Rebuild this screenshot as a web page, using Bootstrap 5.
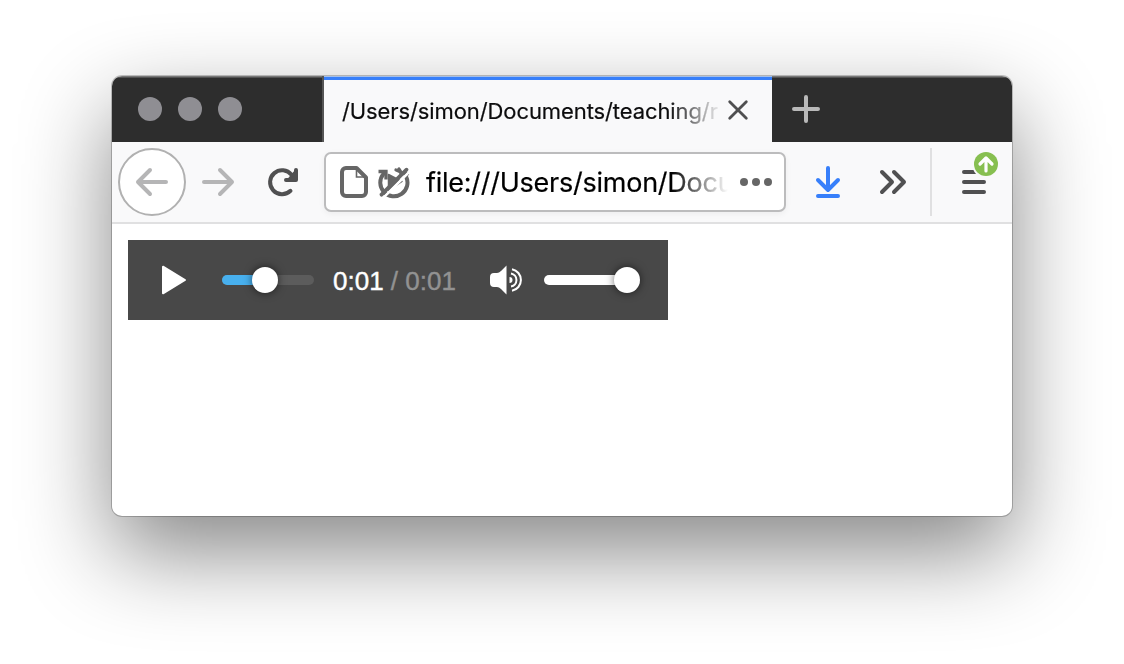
<!DOCTYPE html>
<html lang="en">
<head>
<meta charset="utf-8">
<title>Audio player in a browser window</title>
<link href="https://cdn.jsdelivr.net/npm/bootstrap@5.3.0/dist/css/bootstrap.min.css" rel="stylesheet">
<style>
body{height:664px;padding:76px 112px 0;background:#fff;font-family:Inter,"Liberation Sans",sans-serif;color:#0c0c0d}
svg{display:block;flex:none;fill:none;stroke-linecap:round;stroke-linejoin:round}
.window{width:900px;height:440px;border-radius:10px;background:#fff;box-shadow:0 0 0 1px rgba(0,0,0,.22),0 36px 90px rgba(0,0,0,.48)}
.chrome{border-radius:10px 10px 0 0}
.tabs{height:66px;background:linear-gradient(#777 0,#777 1px,#2d2d2d 2px)}
.lights{width:212px;padding-left:26px;gap:16px;border-right:2px solid #555;height:66px}
.light{width:24px;height:24px;border-radius:50%;background:#8f8e93}
.tab-active{width:448px;height:66px;background:#f9f9fa;border-top:1px solid #a4bfe8;box-shadow:inset 0 3px #377ffa;padding:4px 23px 0 18px}
.tab-title{width:376px;font-size:22px;letter-spacing:-.1px;-webkit-text-stroke:.2px;-webkit-mask-image:linear-gradient(90deg,#000 326px,transparent 380px)}
.toolbar{height:82px;background:#f9f9fa;border-bottom:2px solid #e0e0e1;padding-left:6px}
.address{width:462px;height:60px;border:2px solid #bcbcbd;border-radius:7px;background:#fff;padding-left:12px;box-shadow:0 2px 6px rgba(0,0,0,.05)}
.address-text{width:308px;margin:3px 0 0 16px;font-size:27px;letter-spacing:-.25px;-webkit-text-stroke:.2px;color:#000;-webkit-mask-image:linear-gradient(90deg,#000 245px,transparent 302px)}
.divider{width:2px;height:68px;background:#e0e0e1}
.player{width:540px;height:80px;margin:16px;background:#484848;font:26px "Liberation Sans",sans-serif;color:#fff}
.track{height:10px;border-radius:5px;background:#5c5c5c}
.elapsed{height:10px;border-radius:5px;background:#48b0ee}
.knob{width:26px;height:26px;border-radius:50%;background:#fff;box-shadow:0 0 9px rgba(0,0,0,.6)}
.times{width:176px;padding:2px 0 0 19px;-webkit-text-stroke:.4px}
.total{color:#929292}
</style>
</head>
<body>
<main class="window">
  <div class="chrome overflow-hidden">
    <div class="tabs d-flex">
      <div class="lights d-flex align-items-center"><span class="light"></span><span class="light"></span><span class="light"></span></div>
      <div class="tab-active d-flex align-items-center justify-content-between">
        <div class="tab-title text-nowrap">/Users/simon/Documents/teaching/r</div>
        <svg width="22" height="26" viewBox="727 99 22 26" stroke="#4f4f50" stroke-width="2.8"><path d="M729.7 101.7l16.6 16.6m0-16.6l-16.6 16.6"/></svg>
      </div>
      <svg class="ms-3" width="36" height="66" viewBox="788 76 36 66" stroke="#b9b9b9" stroke-width="4"><path d="M794 109h24M806 97v24"/></svg>
    </div>
    <nav class="toolbar d-flex align-items-center">
      <svg width="68" height="68" viewBox="118 148 68 68"><circle cx="152" cy="182" r="33" fill="#fff" stroke="#b1b1b1" stroke-width="2"/><path d="M166 182h-28m12-12l-12 12 12 12" stroke="#b5b5b6" stroke-width="4"/></svg>
      <svg width="64" height="68" viewBox="186 148 64 68" stroke="#b5b5b6" stroke-width="4"><path d="M204 182h28m-12-12l12 12-12 12"/></svg>
      <svg width="74" height="68" viewBox="250 148 74 68" stroke="#505051" stroke-width="4"><path d="M290.5 190.8A12 12 0 1 1 291.5 174.8"/><path d="M296 170v10h-10" /><path d="M290 179l5-6v6z" fill="#505051"/></svg>
      <div class="address d-flex align-items-center">
        <svg width="72" height="40" viewBox="338 162 72 40">
          <path d="M346 168h10.5l9.5 9.5V192a4 4 0 0 1-4 4h-16a4 4 0 0 1-4-4v-20a4 4 0 0 1 4-4z" stroke="#666" stroke-width="4"/><path d="M356.5 169v8h8" stroke="#666" stroke-width="1.6" stroke-linejoin="miter"/>
          <g stroke="#666" stroke-width="4"><path d="M383.4 174A13.6 13.6 0 1 0 406 176.5"/><path d="M378.5 171.5h7.5v8" stroke-width="3.3" stroke-linecap="butt" stroke-linejoin="miter"/><path d="M396 170q4 1 6 4M399 169l2.5 4 6 1" stroke-width="3.3"/><path d="M388.5 174.5v16l13.5-9z" fill="#666" stroke-width="1.5"/></g>
          <path d="M384 197.2l26-26" stroke="#fff" stroke-width="2.6"/><path d="M381.5 194.7L406.5 169.7" stroke="#666" stroke-width="3.8"/>
        </svg>
        <div class="address-text text-nowrap">file:///Users/simon/Docu</div>
        <svg width="44" height="20" viewBox="734 172 44 20"><g fill="#666"><circle cx="744" cy="182" r="4"/><circle cx="756" cy="182" r="4"/><circle cx="768" cy="182" r="4"/></g></svg>
      </div>
      <svg width="74" height="68" viewBox="786 148 74 68" stroke="#377ffa" stroke-width="4"><path d="M828 168v22m-10-10l10 10 10-10M818 196h20"/></svg>
      <svg width="70" height="68" viewBox="860 148 70 68" stroke="#505051" stroke-width="4"><path d="M882 172l10 10-10 10m12-20l10 10-10 10"/></svg>
      <span class="divider"></span>
      <svg width="80" height="68" viewBox="932 148 80 68"><path d="M964 172h20m-20 10h20m-20 10h20" stroke="#505051" stroke-width="4"/><circle cx="986" cy="164" r="14" fill="#f9f9fa"/><circle cx="986" cy="164" r="12" fill="#87bf50"/><path d="M986 171v-13m-6 6l6-6 6 6" stroke="#fff" stroke-width="3.2"/></svg>
    </nav>
  </div>
  <section class="player d-flex align-items-center">
    <svg width="94" height="80" viewBox="128 240 94 80"><path d="M163 266.7v26.6l22-13.3z" fill="#fff" stroke="#fff" stroke-width="2"/></svg>
    <div class="track position-relative" style="width:92px"><div class="elapsed" style="width:47%"></div><span class="knob position-absolute top-50 translate-middle" style="left:47%"></span></div>
    <div class="times text-nowrap">0:01 <span class="total">/ 0:01</span></div>
    <svg width="54" height="80" viewBox="490 240 54 80"><path d="M490 277q0-4 4-4h3q2 0 4-2l5.5-5.5v29l-5.5-5.5q-2-2-4-2h-3q-4 0-4-4z" fill="#fff"/><path d="M509.5 277a3 3 0 0 1 0 6z" fill="#fff"/><g stroke="#fff" stroke-width="2" stroke-linecap="butt"><path d="M511 273.5a6.6 6.6 0 0 1 0 13M512 269.2a11 11 0 0 1 0 21.6"/></g></svg>
    <div class="track position-relative bg-white" style="width:92px"><span class="knob position-absolute top-50 translate-middle" style="left:90%"></span></div>
  </section>
</main>
<script src="https://cdn.jsdelivr.net/npm/bootstrap@5.3.0/dist/js/bootstrap.bundle.min.js"></script>
</body>
</html>
